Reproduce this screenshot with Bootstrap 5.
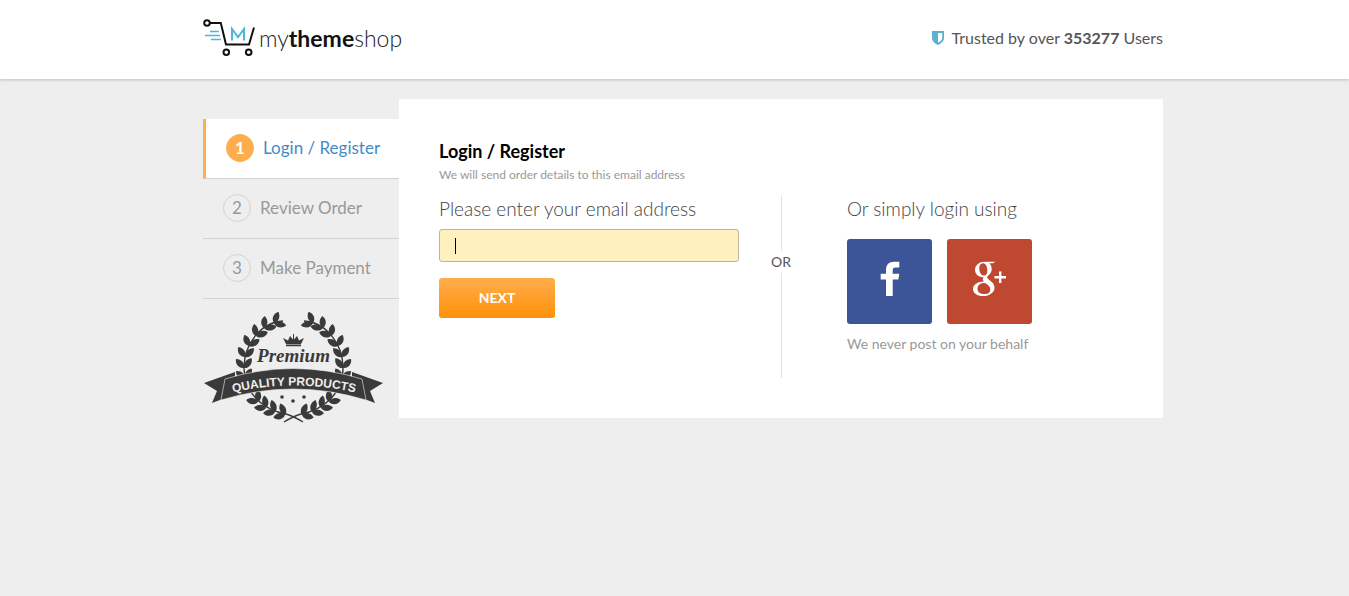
<!DOCTYPE html>
<html lang="en">
<head>
<meta charset="utf-8">
<meta name="viewport" content="width=device-width, initial-scale=1">
<title>Checkout - MyThemeShop</title>
<link href="https://cdn.jsdelivr.net/npm/bootstrap@5.3.0/dist/css/bootstrap.min.css" rel="stylesheet">
<style>
body { background: #eee; color: #555; font-family: Lato, "Open Sans", sans-serif; font-size: 16px; line-height: 24px; }
.site-header { background: #fff; box-shadow: 0 1px 3px rgba(0,0,0,.2); min-height: 79px; padding-left: 17px; }
.page-main { padding: 20px 0 20px 17px; }
.page-width { max-width: 960px; margin: 0 auto; }
.site-header .page-width { height: 76px; }
.brand-word { font-size: 23px; line-height: 36px; font-weight: 300; color: #222; }
.brand-word b { font-weight: 700; color: #111; }
.steps { width: 196px; margin-top: 20px; }
.step { height: 60px; padding: 0 0 2px 20px; gap: 9px; border-bottom: 1px solid #d2d2d2; font-size: 17px; color: #999; text-decoration: none; }
.step-num { width: 28px; height: 28px; border: 1px solid #d2d2d2; border-radius: 50%; }
.step.current { background: #fff; border-left: 3px solid #ffad4d; color: #428bca; }
.current .step-num { background: #ffad4d; border-color: #ffad4d; color: #fff; font-weight: 700; }
.seal { margin-top: 13px; }
.panel { background: #fff; padding: 40px; }
.panel h1 { font-size: 18px; line-height: 24px; font-weight: 700; color: #000; margin: 0; }
.note { font-size: 12px; line-height: 24px; color: #999; }
.lead-text { font-size: 19px; line-height: 28px; font-weight: 300; color: #444; }
.form-side { width: 300px; }
.email-wrap { margin: 6px 0 16px; }
.email-wrap input { height: 33px; background: #fff0bf; border: 1px solid #bbb59b; border-radius: 3px; padding: 4px 14px; caret-color: transparent; }
.email-wrap input:focus { background: #fff0bf; border-color: #bbb59b; box-shadow: none; }
.caret-bar { position: absolute; left: 16px; top: 9px; width: 1px; height: 16px; background: #000; pointer-events: none; }
.btn-next { width: 116px; height: 40px; border: 0; border-radius: 3px; color: #fff; font-size: 14px; line-height: 20px; font-weight: 700; background: linear-gradient(#ffad4d, #ff9108); }
.btn-next:hover { color: #fff; }
.split { width: 84px; height: 183px; color: #555; font-size: 14px; line-height: 22px; }
.split-line { width: 1px; height: 56px; background: #e4e4e4; }
.social-side { padding-left: 24px; }
.social-row { gap: 15px; margin: 16px 0 8px; }
.social { width: 85px; height: 85px; border: 0; border-radius: 3px; padding: 0; }
.fb { background: #3b5598; }
.gp { background: #be4830; }
.behalf { font-size: 14px; color: #999; }
</style>
</head>
<body>
<header class="site-header">
  <div class="page-width d-flex justify-content-between align-items-center">
    <a href="#" class="brand d-flex align-items-center text-decoration-none" aria-label="mythemeshop">
      <svg class="me-1" width="52" height="38" viewBox="0 0 52 38" fill="none" stroke="#111" stroke-width="2">
        <circle cx="4" cy="4" r="2.8"/>
        <path d="M7 4h10.800l5.200 21.500h23L51 8.500"/>
        <circle cx="23.300" cy="33.300" r="2.800"/><circle cx="45.700" cy="33.300" r="2.800"/>
        <path d="M7 12.500h9M2 16.500h15M8 20.500h10" stroke="#4cb8d6" stroke-width="1.700"/>
        <path d="M29 21.500V10l6 8 6-8v11.500" stroke="#4cb8d6" stroke-width="2"/>
      </svg>
      <span class="brand-word">my<b>theme</b>shop</span>
    </a>
    <div class="d-flex align-items-center gap-2">
      <svg width="12" height="14" viewBox="0 0 12 14"><path fill="#5bb2cf" fill-rule="evenodd" d="M0 0h12v7c0 3.500-3 5.500-6 7C3 12.500 0 10.500 0 7ZM6 2v9.800c2.500-1.500 4.200-2.800 4.200-4.800V2Z"/></svg>
      <span>Trusted by over <b>353277</b> Users</span>
    </div>
  </div>
</header>

<main class="page-main">
  <div class="page-width d-flex align-items-start">
    <aside class="steps flex-shrink-0">
      <nav>
        <a href="#" class="step current d-flex align-items-center"><span class="step-num d-flex align-items-center justify-content-center">1</span>Login / Register</a>
        <a href="#" class="step d-flex align-items-center"><span class="step-num d-flex align-items-center justify-content-center">2</span>Review Order</a>
        <a href="#" class="step d-flex align-items-center"><span class="step-num d-flex align-items-center justify-content-center">3</span>Make Payment</a>
      </nav>
      <svg class="seal d-block" width="181" height="113" viewBox="0 0 181 113" fill="#3b3a3a" role="img" aria-label="Premium quality products">
        <defs>
          <g id="pair">
            <path transform="rotate(-52)" d="M0 0C-4.500-3-4-9 0-12 4-8 4-3 0 0Z"/>
            <path transform="rotate(28)" d="M0 0C-4-3-4-9 0-12.500 4-9 4.500-3 0 0Z"/>
          </g>
          <g id="branch">
            <path d="M80 9C58 10 41 32 41 56c0 26 20 42 42 46 7 2 12 5 17 8" fill="none" stroke="#3b3a3a" stroke-width="1.400"/>
            <use href="#pair" transform="translate(71 11) rotate(74)"/>
            <use href="#pair" transform="translate(61 16) rotate(56)"/>
            <use href="#pair" transform="translate(53 24) rotate(44)"/>
            <use href="#pair" transform="translate(46 34) rotate(30)"/>
            <use href="#pair" transform="translate(42 45) rotate(18)"/>
            <use href="#pair" transform="translate(41 56) rotate(10)"/>
            <use href="#pair" transform="translate(42 67) rotate(4)"/>
            <use href="#pair" transform="translate(55 90) rotate(-28)"/>
            <use href="#pair" transform="translate(63 96) rotate(-36)"/>
            <use href="#pair" transform="translate(72 100) rotate(-44)"/>
            <use href="#pair" transform="translate(82 103) rotate(-50)"/>
          </g>
          <path id="ribbon-line" d="M24 82Q91 65 158 82"/>
        </defs>
        <use href="#branch"/>
        <use href="#branch" transform="translate(181 0) scale(-1 1)"/>
        <path d="M80 26l5 2.500 2-4.500 3 3.500V22h1v5.500l3-3.500 2 4.500 5-2.500-3 6H83ZM83 32.500h15v1.800H83Z"/>
        <path d="M1 71l31-11v8l-7 17-16 6 5-12ZM180 71l-31-11v8l7 17 16 6-5-12Z"/>
        <path stroke="#eee" stroke-width=".6" d="M22 67Q90.500 46 159 67L163 88Q90.500 66 18 88Z" />
        <text x="90.500" y="50" text-anchor="middle" font-family="Liberation Serif, serif" font-weight="700" font-style="italic" font-size="19">Premium</text>
        <text fill="#eee" font-family="Liberation Sans, sans-serif" font-weight="700" font-size="12" text-anchor="middle"><textPath href="#ribbon-line" startOffset="50%">QUALITY PRODUCTS</textPath></text>
        <circle cx="79" cy="85" r="1.800"/><circle cx="90" cy="89" r="1.800"/><circle cx="101" cy="85" r="1.800"/>
      </svg>
    </aside>

    <section class="panel flex-grow-1">
      <h1>Login / Register</h1>
      <div class="note">We will send order details to this email address</div>
      <div class="d-flex pt-2">
        <form class="form-side">
          <label for="email" class="lead-text d-block">Please enter your email address</label>
          <div class="email-wrap position-relative">
            <input type="email" id="email" class="form-control">
            <span class="caret-bar"></span>
          </div>
          <button type="button" class="btn btn-next">NEXT</button>
        </form>
        <div class="split d-flex flex-column align-items-center">
          <div class="split-line"></div><div>OR</div><div class="split-line flex-fill"></div>
        </div>
        <div class="social-side">
          <div class="lead-text">Or simply login using</div>
          <div class="social-row d-flex">
            <button type="button" class="social fb" aria-label="Facebook"><svg class="d-block" width="85" height="85" viewBox="0 0 85 85"><path fill="#fff" d="M39 57V40.500h-5.300v-5.700H39V31c0-5.500 3-8.300 8-8.300h5.300v5.800h-3.600c-2.300 0-3 1-3 3v3.300h6.500l-.8 5.700h-5.700V57Z"/></svg></button>
            <button type="button" class="social gp" aria-label="Google Plus"><svg class="d-block" width="85" height="85" viewBox="0 0 85 85"><path fill="#fff" fill-rule="evenodd" d="M48.500 22.700h-11c-5 0-9.500 3.300-9.500 8 0 4.500 3.500 7.500 8.500 7.500-1.200 1.800-.8 3 .5 4.300-6.500.2-11 3-11 7.500 0 4.300 4 7 10 7 7 0 11.500-3.800 11.500-8.300 0-3.600-2-5.200-4.300-7-1.600-1.300-2.900-2-2.900-3.200 0-1.400 1.200-2.200 2.300-3.300 1.500-1.400 2.100-3.200 2.100-5.200 0-2.600-1-4.600-2.600-5.800h3.800ZM36 24.300c3 0 4.300 4 4.300 7.200 0 3.100-1 5-3.300 5-3.100 0-4.700-3.800-4.700-7.100 0-3 1.100-5.100 3.700-5.100ZM38 44c3.500 2.300 5.300 3.600 5.300 6.400 0 2.900-2 4.700-5.700 4.700-4.300 0-7.100-2-7.100-5.300 0-4 3.200-5.900 7.500-5.800Z"/><path stroke="#fff" stroke-width="2.400" d="M47.500 38.300h11.500M53.200 32.500V44"/></svg></button>
          </div>
          <div class="behalf">We never post on your behalf</div>
        </div>
      </div>
    </section>
  </div>
</main>
<script src="https://cdn.jsdelivr.net/npm/bootstrap@5.3.0/dist/js/bootstrap.bundle.min.js"></script>
</body>
</html>
